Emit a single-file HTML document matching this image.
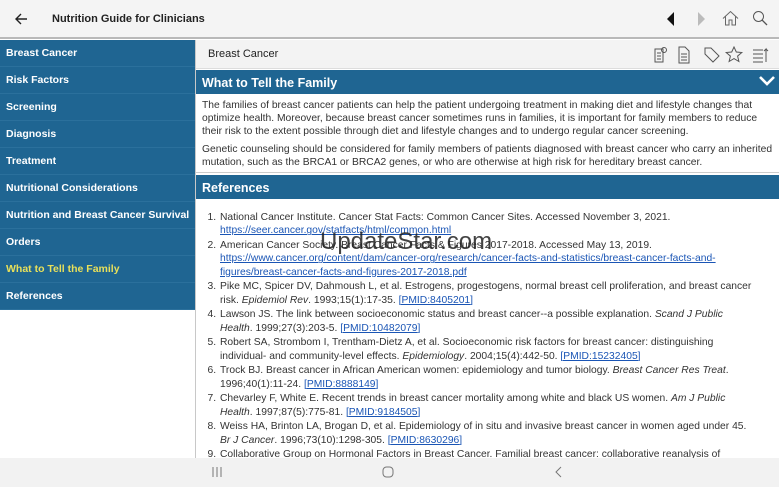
<!DOCTYPE html>
<html><head><meta charset="utf-8"><style>
*{margin:0;padding:0;box-sizing:border-box}
body{width:779px;height:487px;overflow:hidden;font-family:"Liberation Sans",Arial,sans-serif;background:#fff;position:relative}
.top{position:absolute;left:0;top:0;width:779px;height:39px;background:#f4f4f4;border-bottom:2px solid #b9b9b9}
.top .title{position:absolute;left:52px;top:13px;font-size:11px;font-weight:bold;color:#222}
.side{position:absolute;left:0;top:40px;width:195px;height:270px;background:#1f6592}
.side div{height:27px;border-bottom:1px solid #2b709c;color:#fff;font-weight:bold;font-size:10.5px;padding:7px 0 0 6px}
.side div.act{color:#e8e05a}
.vline{position:absolute;left:195px;top:40px;width:1px;height:418px;background:#c8c8c8}
.main{position:absolute;left:196px;top:40px;width:583px;height:418px;overflow:hidden}
.sub{height:29px;background:#f3f3f3;border-bottom:1px solid #ddd;font-size:11px;color:#222;padding:8px 0 0 12px;position:relative}
.hdr{height:24px;background:#1f6592;color:#fff;font-weight:bold;font-size:12.5px;padding:6px 0 0 6px;position:relative}
p{font-size:10.3px;line-height:13px;color:#333;padding:0 6px;margin-top:5px}
ol{font-size:10.3px;line-height:13.4px;color:#333;padding-left:23px;margin-top:12px;width:562px}
ol li{margin-bottom:1.2px;padding-left:1px}
a{color:#1a55b5;text-decoration:underline}
.nav{position:absolute;left:0;top:458px;width:779px;height:29px;background:#f2f2f2}
.wm{position:absolute;left:320px;top:228px;font-size:24px;color:#222;opacity:.85}
</style></head><body>
<div class="top">
<svg style="position:absolute;left:14px;top:12px" width="14" height="14" viewBox="0 0 14 14"><path d="M13 7H2M7 2L2 7l5 5" stroke="#222" stroke-width="1.4" fill="none"/></svg>
<div class="title">Nutrition Guide for Clinicians</div>
<svg style="position:absolute;left:666px;top:12px" width="10" height="14"><path d="M8 0L1 7l7 7z" fill="#111"/></svg>
<svg style="position:absolute;left:697px;top:12px" width="10" height="14"><path d="M1 0l7 7-7 7z" fill="#bbb"/></svg>
<svg style="position:absolute;left:722px;top:10px" width="17" height="17" viewBox="0 0 17 17"><path d="M1 8.5L8.5 1.5 16 8.5M3.5 6.5V15h3.5v-5h3v5h3.5V6.5" stroke="#666" fill="none"/></svg>
<svg style="position:absolute;left:752px;top:10px" width="16" height="16" viewBox="0 0 16 16"><circle cx="6.5" cy="6.5" r="5" stroke="#555" fill="none"/><path d="M10 10l5 5" stroke="#555" stroke-width="1.3"/></svg>
</div>
<div class="side">
<div>Breast Cancer</div><div>Risk Factors</div><div>Screening</div><div>Diagnosis</div><div>Treatment</div><div>Nutritional Considerations</div><div>Nutrition and Breast Cancer Survival</div><div>Orders</div><div class="act">What to Tell the Family</div><div>References</div>
</div>
<div class="vline"></div>
<div class="main">
<div class="sub">Breast Cancer
<svg style="position:absolute;left:456px;top:6px" width="120" height="18" viewBox="0 0 120 18" fill="none" stroke="#555"><path d="M3 3h8v13H3zM5 7h4M5 10h4M5 13h4"/><circle cx="12" cy="4" r="2.5"/><path d="M27 1h6l4 4v12H27zM29 8h6M29 11h6M29 14h6"/><path d="M53 2h6l8 8-6 6-8-8zM57 6h.1"/><path d="M82 1l2.3 5 5.5.5-4.2 3.6 1.3 5.4L82 12.6l-4.9 2.9 1.3-5.4-4.2-3.6 5.5-.5z"/><path d="M101 4h10M101 8h10M101 12h10M101 16h10M114 16V3l-2 2M114 3l2 2"/></svg>
</div>
<div class="hdr" style="margin-top:1px">What to Tell the Family
<svg style="position:absolute;right:4px;top:6px" width="16" height="11"><path d="M1 1l7 7 7-7" stroke="#fff" stroke-width="2.6" fill="none"/></svg></div>
<p>The families of breast cancer patients can help the patient undergoing treatment in making diet and lifestyle changes that optimize health. Moreover, because breast cancer sometimes runs in families, it is important for family members to reduce their risk to the extent possible through diet and lifestyle changes and to undergo regular cancer screening.</p>
<p>Genetic counseling should be considered for family members of patients diagnosed with breast cancer who carry an inherited mutation, such as the BRCA1 or BRCA2 genes, or who are otherwise at high risk for hereditary breast cancer.</p>
<div style="height:4px;border-bottom:1px solid #ccc"></div>
<div class="hdr" style="margin-top:2px">References</div>
<ol>
<li>National Cancer Institute. Cancer Stat Facts: Common Cancer Sites. Accessed November 3, 2021. <a>https://seer.cancer.gov/statfacts/html/common.html</a></li>
<li>American Cancer Society. Breast Cancer Facts &amp; Figures 2017-2018. Accessed May 13, 2019. <a>https://www.cancer.org/content/dam/cancer-org/research/cancer-facts-and-statistics/breast-cancer-facts-and-figures/breast-cancer-facts-and-figures-2017-2018.pdf</a></li>
<li>Pike MC, Spicer DV, Dahmoush L, et al. Estrogens, progestogens, normal breast cell proliferation, and breast cancer risk. <i>Epidemiol Rev</i>. 1993;15(1):17-35. <a>[PMID:8405201]</a></li>
<li>Lawson JS. The link between socioeconomic status and breast cancer--a possible explanation. <i>Scand J Public<br>Health</i>. 1999;27(3):203-5. <a>[PMID:10482079]</a></li>
<li>Robert SA, Strombom I, Trentham-Dietz A, et al. Socioeconomic risk factors for breast cancer: distinguishing<br>individual- and community-level effects. <i>Epidemiology</i>. 2004;15(4):442-50. <a>[PMID:15232405]</a></li>
<li>Trock BJ. Breast cancer in African American women: epidemiology and tumor biology. <i>Breast Cancer Res Treat</i>.<br>1996;40(1):11-24. <a>[PMID:8888149]</a></li>
<li>Chevarley F, White E. Recent trends in breast cancer mortality among white and black US women. <i>Am J Public<br>Health</i>. 1997;87(5):775-81. <a>[PMID:9184505]</a></li>
<li>Weiss HA, Brinton LA, Brogan D, et al. Epidemiology of in situ and invasive breast cancer in women aged under 45.<br><i>Br J Cancer</i>. 1996;73(10):1298-305. <a>[PMID:8630296]</a></li>
<li>Collaborative Group on Hormonal Factors in Breast Cancer. Familial breast cancer: collaborative reanalysis of</li>
</ol>
</div>
<div class="wm">UpdateStar.com</div>
<div class="nav">
<svg style="position:absolute;left:212px;top:9px" width="10" height="10"><path d="M1 0v10M5 0v10M9 0v10" stroke="#777"/></svg>
<svg style="position:absolute;left:382px;top:8px" width="12" height="12"><rect x="1" y="1" width="10" height="10" rx="3.5" stroke="#777" fill="none"/></svg>
<svg style="position:absolute;left:555px;top:8px" width="8" height="12"><path d="M6 1L1 6l5 5" stroke="#777" fill="none"/></svg>
</div>
</body></html>
